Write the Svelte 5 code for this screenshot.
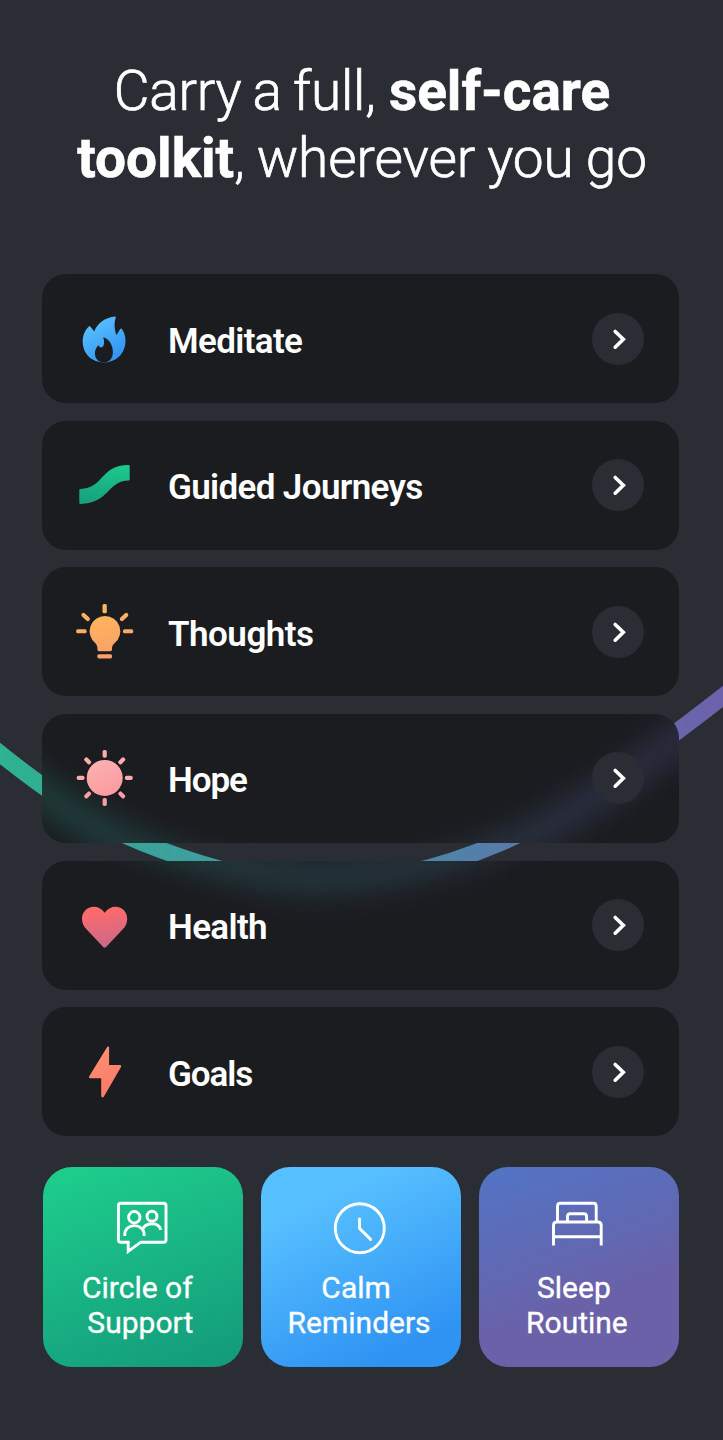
<script>
  const rows = [
    { id: 'meditate', label: 'Meditate' },
    { id: 'journeys', label: 'Guided Journeys' },
    { id: 'thoughts', label: 'Thoughts' },
    { id: 'hope', label: 'Hope', glowTop: 706 },
    { id: 'health', label: 'Health', glowTop: 868 },
    { id: 'goals', label: 'Goals' }
  ];
  const tiles = [
    { id: 'support', lines: ['Circle of', 'Support'] },
    { id: 'calm', lines: ['Calm', 'Reminders'] },
    { id: 'sleep', lines: ['Sleep', 'Routine'] }
  ];
  const turns = [0, 45, 90, 135, 180, 225, 270, 315];
  const ribbon = 'M-10 745.5C40 786 90 822 143 843S262 884 320 884 443 867 500 843 640 762 735 687';
</script>

<main class="screen">
  <svg class="ribbon" viewBox="0 0 723 1440" aria-hidden="true">
    <defs>
      <linearGradient id="g-ribbon" gradientUnits="userSpaceOnUse" x1="0" y1="0" x2="723" y2="0">
        <stop offset="0" stop-color="#2fb391" />
        <stop offset="0.07" stop-color="#30ad93" />
        <stop offset="0.26" stop-color="#3e9f9e" />
        <stop offset="0.62" stop-color="#5083a6" />
        <stop offset="0.7" stop-color="#577bab" />
        <stop offset="0.94" stop-color="#6a65ad" />
        <stop offset="1" stop-color="#6b62ab" />
      </linearGradient>
      <filter id="f-soft" filterUnits="userSpaceOnUse" x="-80" y="600" width="900" height="400" color-interpolation-filters="sRGB">
        <feGaussianBlur stdDeviation="16" />
      </filter>
    </defs>
    <path d={ribbon} fill="none" stroke="url(#g-ribbon)" stroke-width="16.8" />
  </svg>

  <h1>
    <span class="line"><span class="thin">Carry a full,</span>{' '}<b>self-care</b></span>
    <span class="line"><b>toolkit</b><span class="thin wide">, wherever you go</span></span>
  </h1>

  <ul class="rows">
    {#each rows as row}
      <li class="row">
        {#if row.glowTop}
          <svg class="glow" viewBox="42 {row.glowTop} 637 129" aria-hidden="true">
            <path d={ribbon} fill="none" stroke="url(#g-ribbon)" stroke-width="22" filter="url(#f-soft)" />
          </svg>
        {/if}
        <svg class="icon" viewBox="0 0 60 60" aria-hidden="true">
          {#if row.id === 'meditate'}
            <linearGradient id="g-flame" x1="0.2" y1="0" x2="0.8" y2="1"><stop offset="0.1" stop-color="#58c0ff" /><stop offset="1" stop-color="#2f8ff0" /></linearGradient>
            <path fill="url(#g-flame)" d="M41.3 7.5C31 8.3 22.4 15 20.4 22.6L16.2 17.4Q15.5 16.8 14.8 17.5C11 21 8.7 26.500 8.700 32.500 8.700 45 18 53.400 30 53.400S51.500 44.500 51.500 32C51.500 27 50 22.500 47.500 19.600Q46.900 19.100 46.400 19.800L42.300 26.200C40.500 20 39.700 14 41.800 8.200Q41.900 7.500 41.300 7.500Z" />
            <path fill="#1b1c20" d="M29.200 28.200C35 29.600 38.900 36 38.900 43 38.900 49 35.500 53.400 30 53.400S20.900 49.500 20.900 44.500C20.900 41.300 22.200 38.300 24.400 36.300 24.900 37.600 25.900 38.600 27.500 38.400 30.500 37.700 30.700 32.500 29.200 28.200Z" />
          {:else if row.id === 'journeys'}
            <linearGradient id="g-path" x1="0.5" y1="0" x2="0.3" y2="1"><stop offset="0" stop-color="#1dc78b" /><stop offset="1" stop-color="#17a07d" /></linearGradient>
            <path fill="url(#g-path)" d="M6.300 33.900C30 33.700 26 10.200 54.500 10.100Q55.700 10.100 55.700 11.300V24.500Q55.700 25.600 54.700 25.600C33 25.800 35.500 48.700 6.500 48.900Q5.300 48.900 5.300 47.700V34.900Q5.300 33.900 6.300 33.900Z" />
          {:else if row.id === 'thoughts'}
            <linearGradient id="g-bulb" gradientUnits="userSpaceOnUse" x1="25" y1="0" x2="35" y2="58"><stop offset="0.15" stop-color="#ffb75b" /><stop offset="1" stop-color="#f99d6c" /></linearGradient>
            <g fill="url(#g-bulb)">
              <path d="M31 14a15.300 15.300 0 0 1 9.500 27.300Q38 43.300 38 45.600V47.600Q38 49.200 36.400 49.200H25Q23.400 49.200 23.400 47.600V45.600Q23.400 43.300 21.200 41.100A15.300 15.300 0 0 1 31 14Z" />
              <rect x="23.300" y="52.200" width="14.800" height="4.200" rx="1.600" />
              <rect x="28.500" y="2.100" width="4.300" height="9.200" rx="1.500" />
              <rect x="2.200" y="27.200" width="10.400" height="4.100" rx="1.500" />
              <rect x="49" y="27.200" width="10.200" height="4.100" rx="1.500" />
            </g>
            <g stroke="#fcb160" stroke-width="4.200" stroke-linecap="round"><path d="M9.500 12.900L13.800 17M52.200 12.900L47.900 17" /></g>
          {:else if row.id === 'hope'}
            <linearGradient id="g-sun" x1="0.3" y1="0" x2="0.7" y2="1"><stop offset="0" stop-color="#fdb0b2" /><stop offset="1" stop-color="#fb9a9e" /></linearGradient>
            <circle cx="30.700" cy="29.900" r="18" fill="url(#g-sun)" />
            {#each turns as turn}
              <rect x="28.600" y="1.900" width="4.200" height="7.800" rx="1.700" fill={turn > 90 && turn < 270 ? '#fa9ea1' : '#fdacae'} transform="rotate({turn} 30.7 29.9)" />
            {/each}
          {:else if row.id === 'health'}
            <linearGradient id="g-heart" x1="0.4" y1="0" x2="0.6" y2="1"><stop offset="0.1" stop-color="#fc6b6c" /><stop offset="1" stop-color="#c9688a" /></linearGradient>
            <path fill="url(#g-heart)" d="M30.700 17.700C33.800 13.800 37.400 11.800 41.500 11.800 48.200 11.800 53.200 17.200 53.200 23.800 53.200 28 51.800 31.200 48.800 34.300L32.100 52Q30.600 53.500 29.200 52L12.500 34.300C9.500 31.200 8 28 8 23.800 8 17.200 13.100 11.800 19.800 11.800 23.900 11.800 27.600 13.800 30.700 17.700Z" />
          {:else}
            <linearGradient id="g-bolt" x1="0" y1="0" x2="0.4" y2="1"><stop offset="0" stop-color="#ff9376" /><stop offset="1" stop-color="#f97b68" /></linearGradient>
            <path fill="url(#g-bolt)" d="M33 5.200Q33.700 4.300 34.500 4.600 35.200 4.900 35.100 5.900V23.100H46.200Q47.800 23.300 47 24.900L29.800 54.700Q29.100 55.700 28.100 55.300 27.200 55 27.200 54V36.300H16Q14.300 36.100 15.100 34.500Z" />
          {/if}
        </svg>
        <span class="label {row.id}">{row.label}</span>
        <span class="go">
          <svg viewBox="0 0 52 52" aria-hidden="true"><path d="M23.200 18.500L31.300 26.200 23.200 34.200" fill="none" stroke="#fff" stroke-width="3.600" stroke-linecap="round" stroke-linejoin="miter" /></svg>
        </span>
      </li>
    {/each}
  </ul>

  <div class="tiles">
    {#each tiles as tile}
      <section class="tile {tile.id}">
        <svg class="glyph" viewBox="0 0 60 60" fill="none" stroke="#fff" stroke-width="2.900" aria-hidden="true">
          {#if tile.id === 'support'}
            <path d="M7.900 5.200H50.500Q53 5.200 53 7.700V41.700Q53 44.200 50.500 44.200H27.800L15.200 53.500V44.200H7.900Q5.400 44.200 5.400 41.700V7.700Q5.400 5.200 7.900 5.200Z" />
            <circle cx="21.300" cy="19.200" r="5.700" />
            <circle cx="39" cy="18.300" r="5" />
            <path d="M11.800 38V36.500C11.800 31.200 15.800 27.600 21.400 27.600S31.100 31.200 31.100 36.500V38M30.200 30.200C32 27.200 35.300 25.800 39.200 25.800 43.400 25.800 46.600 27.800 47.800 31.800" />
          {:else if tile.id === 'calm'}
            <circle cx="28.800" cy="30.200" r="24.500" />
            <path d="M28.500 21V30.400L39.600 41.400" stroke-linecap="round" stroke-linejoin="round" />
          {:else}
            <path d="M8.500 24V8.200Q8.500 5.300 11.400 5.300H44.300Q47.200 5.300 47.200 8.200V24M18.500 24V18.500Q18.500 15.700 21.300 15.700H34.800Q37.600 15.700 37.600 18.500V24M4.500 47.500V27.300Q4.500 24 7.800 24H48.900Q52.200 24 52.200 27.300V47.500M4.500 38.800H52.200" />
          {/if}
        </svg>
        <p><span class="first">{tile.lines[0]}</span><span>{tile.lines[1]}</span></p>
      </section>
    {/each}
  </div>
</main>

<style>
  :global(body) {
    margin: 0;
    background: #2b2d35;
  }
  .screen {
    position: relative;
    box-sizing: border-box;
    width: 723px;
    height: 1440px;
    padding: 58px 44px 0 42px;
    overflow: hidden;
    background: #2b2d35;
    color: #fff;
    font-family: Roboto, 'Liberation Sans', sans-serif;
  }
  .ribbon {
    position: absolute;
    inset: 0;
    width: 723px;
    height: 1440px;
  }
  h1 {
    margin: 0 -2px 0 1px;
    height: 216px;
    font-size: 55px;
    line-height: 67px;
    font-weight: 300;
    text-align: center;
  }
  .line {
    display: block;
    white-space: pre;
  }
  .thin {
    letter-spacing: -0.25px;
    word-spacing: -2px;
    -webkit-text-stroke: 0.7px #fff;
  }
  .thin.wide {
    letter-spacing: -0.12px;
    word-spacing: -1.2px;
  }
  h1 b {
    font-weight: 700;
    -webkit-text-stroke: 0.6px #fff;
  }
  .rows {
    display: flex;
    flex-direction: column;
    gap: 17.65px;
    margin: 0;
    padding: 0;
    list-style: none;
  }
  .row {
    position: relative;
    display: flex;
    align-items: center;
    box-sizing: border-box;
    width: 637px;
    height: 129px;
    padding: 0 35px 0 32px;
    border-radius: 24px;
    overflow: hidden;
    background: #1b1c20;
  }
  .glow {
    position: absolute;
    inset: 0;
    width: 637px;
    height: 129px;
    opacity: 0.34;
  }
  .icon,
  .label,
  .go {
    position: relative;
  }
  .icon {
    width: 60px;
    height: 60px;
    margin-right: 34px;
  }
  .label {
    flex: 1;
    padding-top: 6px;
    font-size: 35px;
    line-height: 42px;
    font-weight: 600;
    letter-spacing: -0.65px;
    white-space: nowrap;
  }
  .label.thoughts {
    letter-spacing: -0.5px;
  }
  .label.hope,
  .label.goals {
    letter-spacing: -1.1px;
  }
  .go {
    width: 52px;
    height: 52px;
    border-radius: 50%;
    background: #2b2d35;
  }
  .go svg {
    display: block;
    width: 52px;
    height: 52px;
  }
  .tiles {
    position: relative;
    display: flex;
    gap: 17.800px;
    margin: 31.200px 0 0 1.300px;
  }
  .tile {
    display: flex;
    flex-direction: column;
    flex-shrink: 0;
    align-items: center;
    box-sizing: border-box;
    width: 200px;
    height: 200px;
    padding-top: 30.400px;
    border-radius: 29px;
  }
  .tile.support {
    background: linear-gradient(160deg, #1dcb8b 8%, #13997a 100%);
  }
  .tile.calm {
    background: linear-gradient(155deg, #57c0ff 20%, #2f93f3 85%);
  }
  .tile.sleep {
    background: linear-gradient(160deg, #5373c3 5%, #6a61a8 65%);
  }
  .glyph {
    width: 60px;
    height: 60px;
  }
  p {
    display: flex;
    flex-direction: column;
    align-items: center;
    margin: 12.300px 4px 0 0;
    font-size: 30px;
    line-height: 35px;
    font-weight: 400;
    -webkit-text-stroke: 0.35px #fff;
  }
  .tile.support p {
    margin-right: 6px;
  }
  .first {
    padding-right: 6px;
  }
</style>
